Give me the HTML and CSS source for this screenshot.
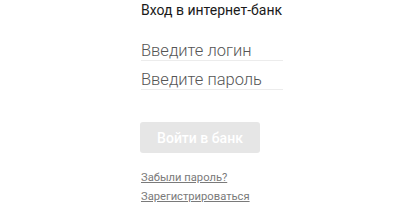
FILE: index.html
```html
<!doctype html>
<html lang="ru">
  <head>
    <meta charset="utf-8">
    <meta name="viewport" content="width=device-width, initial-scale=1">
    <title>Вход в интернет-банк</title>
    <link rel="stylesheet" href="styles.css">
  </head>
<body>
    <form class="login">
        <h1 class="login-title">Вход в интернет-банк</h1>
        <input class="field field-first" type="text" placeholder="Введите логин">
        <input class="field" type="password" placeholder="Введите пароль">
        <button class="submit" type="button" disabled>Войти в банк</button>
        <div class="links">
            <a href="#">Забыли пароль?</a>
            <a href="#">Зарегистрироваться</a>
        </div>
    </form>
</body>
</html>
```

FILE: styles.css
```css
body {
    margin: 0;
    background: #fff;
    font-family: Roboto, "Liberation Sans", sans-serif;
}

.login {
    display: flex;
    flex-direction: column;
    align-items: flex-start;
    width: 142px;
    padding-left: 141px;
}

.login-title {
    margin: 1px 0 0 0;
    font-size: 14px;
    line-height: 18px;
    font-weight: 400;
    white-space: nowrap;
    color: #1a1a1a;
}

.field {
    box-sizing: border-box;
    width: 142px;
    height: 21px;
    margin: 8px 0 0 0;
    padding: 0;
    border: none;
    border-bottom: 1px solid #ececec;
    outline: none;
    font-family: inherit;
    font-size: 16.5px;
    font-weight: 300;
    color: #555;
    background: transparent;
}

.field-first {
    margin-top: 21px;
}

.field::placeholder {
    color: #555;
}

.submit {
    box-sizing: border-box;
    width: 120px;
    height: 31px;
    margin: 32px 0 0 -1px;
    border: none;
    border-radius: 3px;
    background: #e6e6e6;
    color: #fff;
    font-family: inherit;
    font-size: 14px;
    font-weight: 500;
}

.links {
    display: flex;
    flex-direction: column;
    margin-top: 15px;
}

.links a {
    font-size: 11.2px;
    line-height: 19px;
    font-weight: 400;
    color: #7a7a7a;
}
```
